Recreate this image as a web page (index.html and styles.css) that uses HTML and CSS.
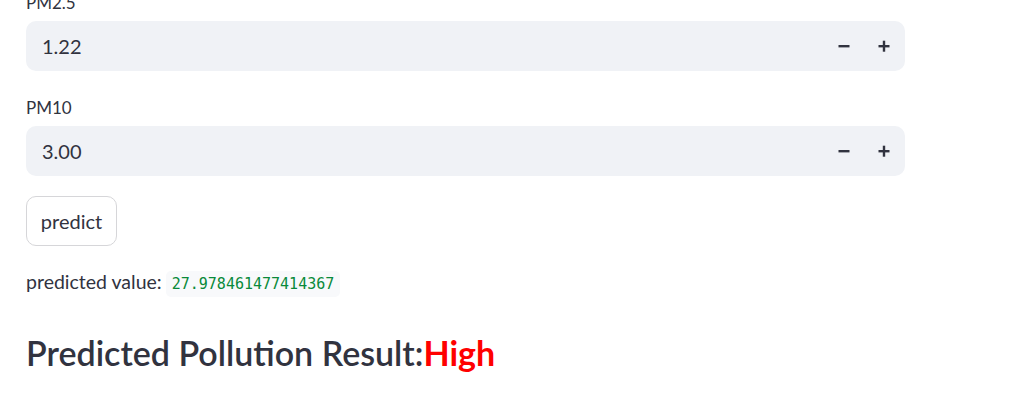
FILE: index.html
```html
<!DOCTYPE html>
<html>
<head>
<meta charset="utf-8">
<link rel="stylesheet" href="styles.css">
</head>
<body>
<main class="main">
  <div class="field field-first">
    <div class="label">PM2.5</div>
    <div class="num-input">
      <span class="value">1.22</span>
      <div class="steps">
        <button class="step" aria-label="decrement"><svg width="12" height="12" viewBox="0 0 12 12"><rect x="0.5" y="5" width="11" height="2.4" fill="#31333f"/></svg></button>
        <button class="step" aria-label="increment"><svg width="12" height="12" viewBox="0 0 12 12"><rect x="0.5" y="5" width="11" height="2.4" fill="#31333f"/><rect x="4.8" y="0.7" width="2.4" height="11" fill="#31333f"/></svg></button>
      </div>
    </div>
  </div>
  <div class="field">
    <div class="label">PM10</div>
    <div class="num-input">
      <span class="value">3.00</span>
      <div class="steps">
        <button class="step" aria-label="decrement"><svg width="12" height="12" viewBox="0 0 12 12"><rect x="0.5" y="5" width="11" height="2.4" fill="#31333f"/></svg></button>
        <button class="step" aria-label="increment"><svg width="12" height="12" viewBox="0 0 12 12"><rect x="0.5" y="5" width="11" height="2.4" fill="#31333f"/><rect x="4.8" y="0.7" width="2.4" height="11" fill="#31333f"/></svg></button>
      </div>
    </div>
  </div>
  <div class="btn-row"><button class="btn">predict</button></div>
  <p class="result">predicted value: <code class="code">27.978461477414367</code></p>
  <h3 class="heading">Predicted Pollution Result:<span class="high">High</span></h3>
</main>
</body>
</html>
```
FILE: styles.css
```css
html, body {
  margin: 0;
  padding: 0;
  background: #ffffff;
}
body {
  font-family: "Source Sans Pro", Lato, "Liberation Sans", sans-serif;
  color: #31333f;
}
.main {
  width: 879px;
  padding-left: 26px;
}
.field {
  margin-bottom: 27px;
}
.field-first {
  margin-top: -7px;
}
.label {
  font-size: 17px;
  line-height: 20px;
  height: 20px;
  margin-bottom: 8px;
}
.num-input {
  height: 50px;
  background: #f0f2f6;
  border-radius: 10px;
  display: flex;
  align-items: center;
  justify-content: space-between;
  padding-left: 16px;
  box-sizing: border-box;
}
.value {
  font-size: 20px;
}
.steps {
  display: flex;
  height: 100%;
  padding-right: 1px;
}
.step {
  width: 40px;
  height: 100%;
  border: none;
  background: transparent;
  padding: 0;
  display: flex;
  align-items: center;
  justify-content: center;
}
.btn-row {
  margin-top: -7px;
}
.btn {
  height: 50px;
  width: 91px;
  border: 1px solid #d6d6d9;
  border-radius: 10px;
  background: #ffffff;
  font-family: inherit;
  font-size: 20px;
  color: #31333f;
  padding: 0;
}
.result {
  margin: 21px 0 0;
  font-size: 19.5px;
  line-height: 30px;
}
.code {
  font-family: "DejaVu Sans Mono", "Liberation Mono", monospace;
  font-size: 15px;
  color: #098a3a;
  background: #f8f9fb;
  padding: 4px 6px;
  border-radius: 5px;
  margin-left: -1px;
}
.heading {
  margin: 32px 0 0;
  font-size: 34px;
  line-height: 44px;
  font-weight: 600;
}
.high {
  color: #ff0000;
  font-weight: 700;
}
```
